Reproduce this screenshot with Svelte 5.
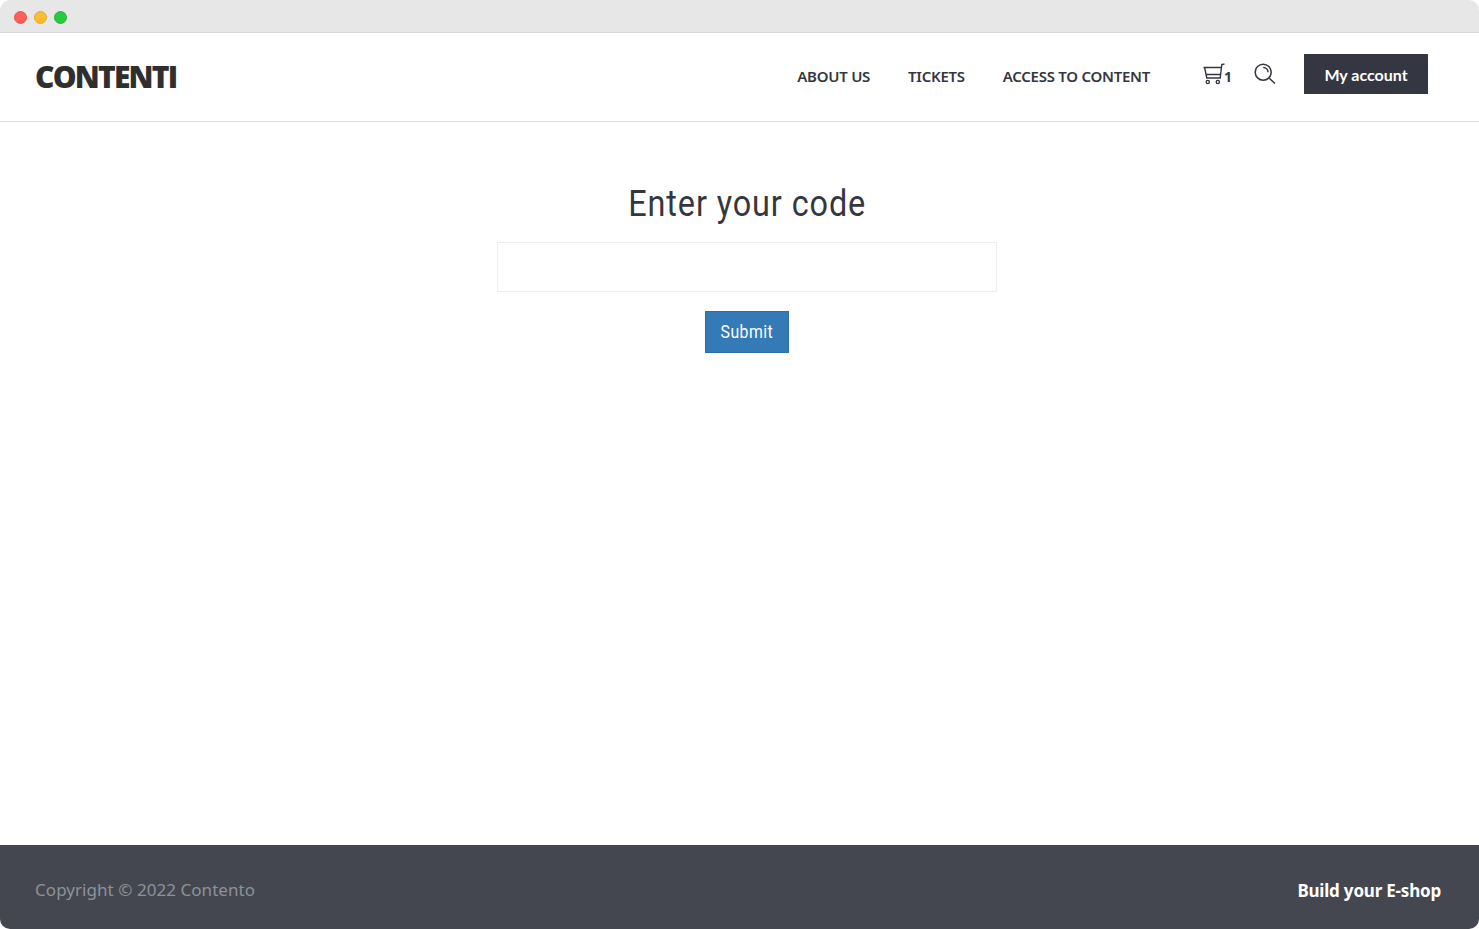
<script>
	const links = ['ABOUT US', 'TICKETS', 'ACCESS TO CONTENT']
	let code = $state('')
</script>

<div class="window">
	<div class="titlebar">
		<span class="dot red"></span>
		<span class="dot yellow"></span>
		<span class="dot green"></span>
	</div>

	<header>
		<a class="logo" href="#top">CONTENTI</a>
		<nav>
			{#each links as link}
				<a href="#top">{link}</a>
			{/each}
		</nav>
		<div class="tools">
			<a class="cart" href="#top">
				<svg width="24" height="22" viewBox="0 0 24 22" fill="none" stroke="#343741" stroke-width="1.4">
					<path d="M0.5 4.5H18.5M21.5 1L18.8 1.6L17.2 15H3.8L1.6 4.5M2.8 11.5H17.8" />
					<circle cx="4.8" cy="19" r="1.6" />
					<circle cx="14.8" cy="19" r="1.6" />
				</svg>
				<span>1</span>
			</a>
			<a class="search" href="#top" aria-label="Search">
				<svg width="22" height="22" viewBox="0 0 22 22" fill="none" stroke="#343741" stroke-width="1.5">
					<circle cx="9.2" cy="9.2" r="8" />
					<path d="M9.2 4.4A4.8 4.8 0 0 1 14 9.2M15 15L21 20.5" />
				</svg>
			</a>
			<a class="account" href="#top">My account</a>
		</div>
	</header>

	<main>
		<h1>Enter your code</h1>
		<form onsubmit={(e) => e.preventDefault()}>
			<input type="text" bind:value={code} />
			<button type="submit"><span>Submit</span></button>
		</form>
	</main>

	<footer>
		<span class="copy">Copyright © 2022 Contento</span>
		<a href="#top">Build your E-shop</a>
	</footer>
</div>

<style>
	:global(body) { background: #fff; }

	.window {
		height: 929px; display: flex; flex-direction: column; overflow: hidden;
		border-radius: 10px; background: #fff; font-family: "Noto Sans", sans-serif; color: #343741;
	}

	.titlebar {
		height: 32px; flex: none; background: #e7e7e7; border-bottom: 1px solid #d9d9d9;
		display: flex; align-items: center; gap: 7px; padding-left: 14px;
	}
	.dot { width: 13px; height: 13px; margin-top: 2px; border-radius: 50%; box-sizing: border-box; }
	.red { background: #ff5f57; border: 1px solid #e9534c; }
	.yellow { background: #febc2e; border: 1px solid #e5a82a; }
	.green { background: #28c840; border: 1px solid #25b53a; }

	header {
		height: 88px; flex: none; border-bottom: 1px solid #e0e0e0;
		display: flex; align-items: center; padding: 0 51px 0 35px;
	}
	a { text-decoration: none; color: inherit; }

	.logo {
		font-family: "Open Sans", sans-serif; font-weight: 800; font-size: 30px;
		letter-spacing: -1.8px; color: #2f2f2f; margin-right: auto; margin-bottom: 2px;
	}

	nav { display: flex; gap: 38px; margin-right: 53px; margin-bottom: 2px; }
	nav a { font-size: 15px; font-weight: 600; letter-spacing: -0.26px; }

	.tools { display: flex; align-items: center; margin-bottom: 6px; }
	.cart { display: flex; align-items: flex-end; width: 28px; }
	.cart svg { flex: none; }
	.cart span { font-size: 14px; font-weight: 700; line-height: 14px; margin-left: -3px; margin-bottom: 1px; }
	.search { display: flex; margin-left: 23px; }
	.account {
		margin-left: 28px; width: 124px; height: 40px; background: #343741; color: #fff;
		display: flex; align-items: center; justify-content: center;
		font-family: Lato, sans-serif; font-size: 16px; font-weight: 700; letter-spacing: 0;
	}

	main { flex: 1; display: flex; flex-direction: column; align-items: center; padding: 60px 0 0 15px; }
	h1 {
		margin: 0; font-family: Roboto, sans-serif; font-weight: 400; font-size: 36px; line-height: 42px;
		letter-spacing: 1px; color: #343741; transform: translateY(1px) scaleX(0.9);
	}
	form { display: flex; flex-direction: column; align-items: center; margin-top: 18px; }
	input {
		width: 500px; height: 50px; box-sizing: border-box; border: 1px solid #eeeeee;
		background: #fff; outline: none; padding: 0 12px;
	}
	button {
		margin-top: 19px; width: 84px; height: 42px; padding: 0 0 2px;
		background: #337ab7; border: 1px solid #2e6da4; color: #fff;
		font-family: Roboto, sans-serif; font-size: 18px; letter-spacing: 0.5px;
	}
	button span { display: inline-block; transform: scaleX(0.88); }

	footer {
		height: 84px; flex: none; box-sizing: border-box; background: #454750; padding: 5px 38px 0 35px;
		display: flex; align-items: center; justify-content: space-between;
	}
	.copy { color: #8e9296; font-size: 17px; letter-spacing: 0.05px; }
	footer a { color: #fff; font-weight: 700; font-size: 17px; letter-spacing: -0.2px; margin-top: 1px; }
</style>
